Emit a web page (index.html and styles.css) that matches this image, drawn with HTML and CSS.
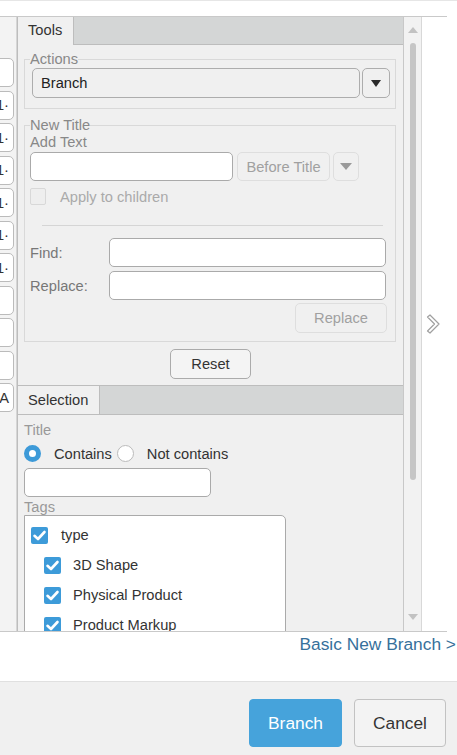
FILE: index.html
```html
<!DOCTYPE html>
<html>
<head>
<meta charset="utf-8">
<link rel="stylesheet" href="styles.css">
</head>
<body>
<div class="topline"></div>
<div class="main">
  <div class="strip">
    <div class="sbtn"></div>
    <div class="sbtn">1·</div>
    <div class="sbtn">1·</div>
    <div class="sbtn">1·</div>
    <div class="sbtn">1·</div>
    <div class="sbtn">1·</div>
    <div class="sbtn">1·</div>
    <div class="sbtn"></div>
    <div class="sbtn"></div>
    <div class="sbtn"></div>
    <div class="sbtn">A</div>
  </div>
  <div class="panel">
    <div class="tabhead"><div class="tab">Tools</div></div>
    <div class="tools">
      <fieldset class="fs fs-actions">
        <legend>Actions</legend>
        <div class="selrow">
          <div class="select">Branch</div>
          <div class="dd"><span class="tri"></span></div>
        </div>
      </fieldset>
      <fieldset class="fs fs-title">
        <legend>New Title</legend>
        <div class="lbl">Add Text</div>
        <div class="addrow">
          <input class="input w-add" type="text">
          <div class="btn-dis btn-before">Before Title</div>
          <div class="btn-dis dd-dis"><span class="tri tri-dis"></span></div>
        </div>
        <div class="chkrow"><span class="chk-dis"></span><span>Apply to children</span></div>
        <div class="hr"></div>
        <div class="frow"><span class="flbl">Find:</span><input class="input w-find" type="text"></div>
        <div class="frow frow2"><span class="flbl">Replace:</span><input class="input w-find" type="text"></div>
        <div class="reprow"><div class="btn-dis btn-rep">Replace</div></div>
      </fieldset>
      <div class="resetrow"><div class="btn-reset">Reset</div></div>
    </div>
    <div class="tabhead tabhead2"><div class="tab tab-sel">Selection</div></div>
    <div class="sel">
      <div class="glbl">Title</div>
      <div class="radiorow">
        <span class="radio radio-on"></span><span class="rtxt">Contains</span>
        <span class="radio radio-off"></span><span class="rtxt2">Not contains</span>
      </div>
      <input class="input w-title" type="text">
      <div class="glbl tags-lbl">Tags</div>
      <div class="tagbox">
        <div class="trow"><span class="cb"><svg width="17" height="17" viewBox="0 0 17 17"><polyline points="3.5,8.8 7,12 13.5,5" fill="none" stroke="#fff" stroke-width="2.6" stroke-linecap="round" stroke-linejoin="round"/></svg></span><span>type</span></div>
        <div class="trow child"><span class="cb"><svg width="17" height="17" viewBox="0 0 17 17"><polyline points="3.5,8.8 7,12 13.5,5" fill="none" stroke="#fff" stroke-width="2.6" stroke-linecap="round" stroke-linejoin="round"/></svg></span><span>3D Shape</span></div>
        <div class="trow child"><span class="cb"><svg width="17" height="17" viewBox="0 0 17 17"><polyline points="3.5,8.8 7,12 13.5,5" fill="none" stroke="#fff" stroke-width="2.6" stroke-linecap="round" stroke-linejoin="round"/></svg></span><span>Physical Product</span></div>
        <div class="trow child"><span class="cb"><svg width="17" height="17" viewBox="0 0 17 17"><polyline points="3.5,8.8 7,12 13.5,5" fill="none" stroke="#fff" stroke-width="2.6" stroke-linecap="round" stroke-linejoin="round"/></svg></span><span>Product Markup</span></div>
      </div>
    </div>
  </div>
  <div class="scroll">
    <span class="up"></span>
    <span class="thumb"></span>
    <span class="spacer"></span>
    <span class="down"></span>
  </div>
  <div class="side">
    <svg width="16" height="20" viewBox="0 0 16 20"><path d="M2.5 3 L5 1 L14 10 L5 19 L2.5 17 L9.5 10 Z" fill="#fff" stroke="#a0a0a0" stroke-width="1.2" stroke-linejoin="round"/></svg>
  </div>
</div>
<div class="linkrow"><a class="link" href="#">Basic New Branch &gt;</a></div>
<div class="footer">
  <button class="fbtn fbtn-primary">Branch</button>
  <button class="fbtn fbtn-cancel">Cancel</button>
</div>
</body>
</html>
```

FILE: styles.css
```css
* { box-sizing: border-box; }
html, body { margin: 0; padding: 0; }
body {
  width: 457px;
  height: 755px;
  overflow: hidden;
  background: #fff;
  font-family: "Liberation Sans", Arial, sans-serif;
  font-size: 11pt;
  color: #333;
}
.topline { height: 1px; background: #e6e6e6; margin-bottom: 15px; }
.main {
  display: flex;
  width: 447px;
  height: 616px;
  border-top: 1px solid #c9c9c9;
  border-bottom: 1px solid #c9c9c9;
}
.strip {
  flex: none;
  width: 17px;
  background: #f3f3f3;
  border-right: 1px solid #d6d6d6;
  overflow: hidden;
  padding-top: 41px;
  display: flex;
  flex-direction: column;
  gap: 3.5px;
}
.sbtn {
  flex: none;
  height: 29px;
  width: 19px;
  margin-left: -5px;
  border: 1px solid #bbb;
  border-radius: 5px;
  background: #fff;
  display: flex;
  justify-content: flex-end;
  align-items: center;
  padding-right: 4px;
  white-space: nowrap;
  overflow: hidden;
  color: #333;
}
.panel {
  flex: none;
  width: 387px;
  background: #f0f0f0;
  border-left: 1px solid #bdbdbd;
  border-right: 1px solid #c8c8c8;
  overflow: hidden;
}
.tabhead {
  display: flex;
  height: 28px;
  background: #d4d6d6;
  border-bottom: 1px solid #bdbdbd;
}
.tabhead2 { height: 30px; border-top: 1px solid #bdbdbd; }
.tab {
  width: 56px;
  height: 28px;
  margin-bottom: -1px;
  background: #f0f0f0;
  border-right: 1px solid #bdbdbd;
  padding-left: 10px;
  line-height: 27px;
  color: #333;
}
.tab-sel { width: 82px; line-height: 29px; }
.tools { padding: 6px 0 6px; }
.fs {
  margin: 0 7px 0 6px;
  border: 1px solid #d9d9d9;
  padding: 0 0 10px 5px;
  min-width: 0;
}
.fs legend {
  padding: 0;
  line-height: 16px;
  color: #888;
  font-size: 11pt;
}
.fs-title { margin-top: 8px; padding-bottom: 8px; }
.selrow { display: flex; gap: 2px; margin: 1px 0 0 2px; }
.select {
  width: 328px;
  height: 30px;
  border: 1px solid #adadad;
  border-radius: 5px;
  padding-left: 8px;
  line-height: 28px;
  color: #222;
}
.dd {
  width: 28px;
  height: 30px;
  border: 1px solid #adadad;
  border-radius: 5px;
  display: flex;
  align-items: center;
  justify-content: center;
}
.tri {
  width: 0;
  height: 0;
  border-left: 5.5px solid transparent;
  border-right: 5.5px solid transparent;
  border-top: 7px solid #2a2a2a;
}
.tri-dis {
  border-left-width: 6px;
  border-right-width: 6px;
  border-top: 7px solid #9a9a9a;
}
.lbl { line-height: 16px; margin-top: 1px; color: #888; }
.addrow { display: flex; margin-top: 2px; }
.input {
  display: block;
  background: #fff;
  border: 1px solid #aaa;
  border-radius: 5px;
  height: 29px;
  margin: 0;
  padding: 0 6px;
  font: inherit;
  outline: none;
}
.w-add { width: 203px; }
.btn-dis {
  border: 1px solid #dedede;
  border-radius: 5px;
  color: #a0a0a0;
  background: #f0f0f0;
  display: flex;
  align-items: center;
  justify-content: center;
}
.btn-before { margin-left: 4px; width: 93px; height: 29px; }
.dd-dis { margin-left: 3px; width: 26px; height: 29px; }
.chkrow {
  display: flex;
  align-items: center;
  height: 17px;
  margin-top: 7px;
  color: #aaa;
}
.chk-dis {
  width: 16px;
  height: 17px;
  border: 1px solid #d8d8d8;
  border-radius: 2px;
  background: #eee;
  margin-right: 14px;
}
.hr { margin: 20px 12px 0; height: 1px; background: #d5d5d5; }
.frow { display: flex; align-items: center; margin-top: 12px; }
.frow2 { margin-top: 4px; }
.flbl { width: 79px; color: #777; }
.w-find { width: 277px; }
.reprow { display: flex; justify-content: flex-end; margin: 3px 8px 0 0; }
.btn-rep { width: 92px; height: 30px; }
.resetrow { display: flex; justify-content: center; margin-top: 7px; }
.btn-reset {
  width: 81px;
  height: 30px;
  border: 1px solid #ababab;
  border-radius: 5px;
  background: #f4f4f4;
  color: #333;
  display: flex;
  align-items: center;
  justify-content: center;
}
.sel { padding: 7px 0 0 6px; }
.glbl { line-height: 16px; color: #999; }
.radiorow { display: flex; align-items: center; height: 17px; margin-top: 7px; }
.radio { width: 17px; height: 17px; border-radius: 50%; background: #fff; flex: none; }
.radio-on { border: 5px solid #3d9ad8; }
.radio-off { border: 1px solid #bbb; }
.rtxt { margin: 0 5px 0 13px; color: #333; }
.rtxt2 { margin-left: 13px; color: #333; }
.w-title { width: 187px; margin-top: 6px; }
.tags-lbl { margin-top: 2px; }
.tagbox {
  width: 262px;
  height: 200px;
  border: 1px solid #aaa;
  border-radius: 0 5px 0 0;
  background: #fff;
  padding: 4px 0 0 6px;
}
.trow { height: 30px; display: flex; align-items: center; color: #333; }
.trow.child { padding-left: 13px; }
.cb {
  width: 17px;
  height: 17px;
  background: #3d9bd9;
  border-radius: 2px;
  margin-right: 13px;
  display: flex;
  flex: none;
}
.trow.child .cb { margin-right: 12px; }
.scroll {
  flex: none;
  width: 18px;
  background: #f2f2f2;
  border-right: 1px solid #d8d8d8;
  display: flex;
  flex-direction: column;
  align-items: center;
  padding: 10px 0 11px;
}
.up {
  width: 0; height: 0;
  border-left: 5.5px solid transparent;
  border-right: 5.5px solid transparent;
  border-bottom: 6px solid #c2c2c2;
}
.thumb {
  width: 6px;
  height: 437px;
  margin-top: 10px;
  background: #c6c6c6;
  border-radius: 3px;
}
.spacer { flex: 1; }
.down {
  width: 0; height: 0;
  border-left: 5.5px solid transparent;
  border-right: 5.5px solid transparent;
  border-top: 6px solid #c2c2c2;
}
.side {
  flex: 1;
  display: flex;
  align-items: center;
  padding-left: 3px;
}
.side svg { display: block; }
.linkrow {
  height: 49px;
  text-align: right;
  padding: 2px 1px 0 0;
}
.link {
  font-size: 13pt;
  line-height: 20px;
  color: #36709b;
  text-decoration: none;
}
.footer {
  height: 74px;
  border-top: 1px solid #e0e0e0;
  background: #f0f0f0;
  display: flex;
  justify-content: flex-end;
  gap: 12px;
  padding: 17px 11px 0 0;
}
.fbtn {
  height: 48px;
  border-radius: 4px;
  font-family: "Liberation Sans", Arial, sans-serif;
  font-size: 13pt;
  padding: 0;
  margin: 0;
}
.fbtn-primary {
  width: 93px;
  background: #46a3db;
  border: 1px solid #46a3db;
  color: #fff;
}
.fbtn-cancel {
  width: 92px;
  background: #f3f3f3;
  border: 1px solid #c2c2c2;
  color: #333;
}
```
